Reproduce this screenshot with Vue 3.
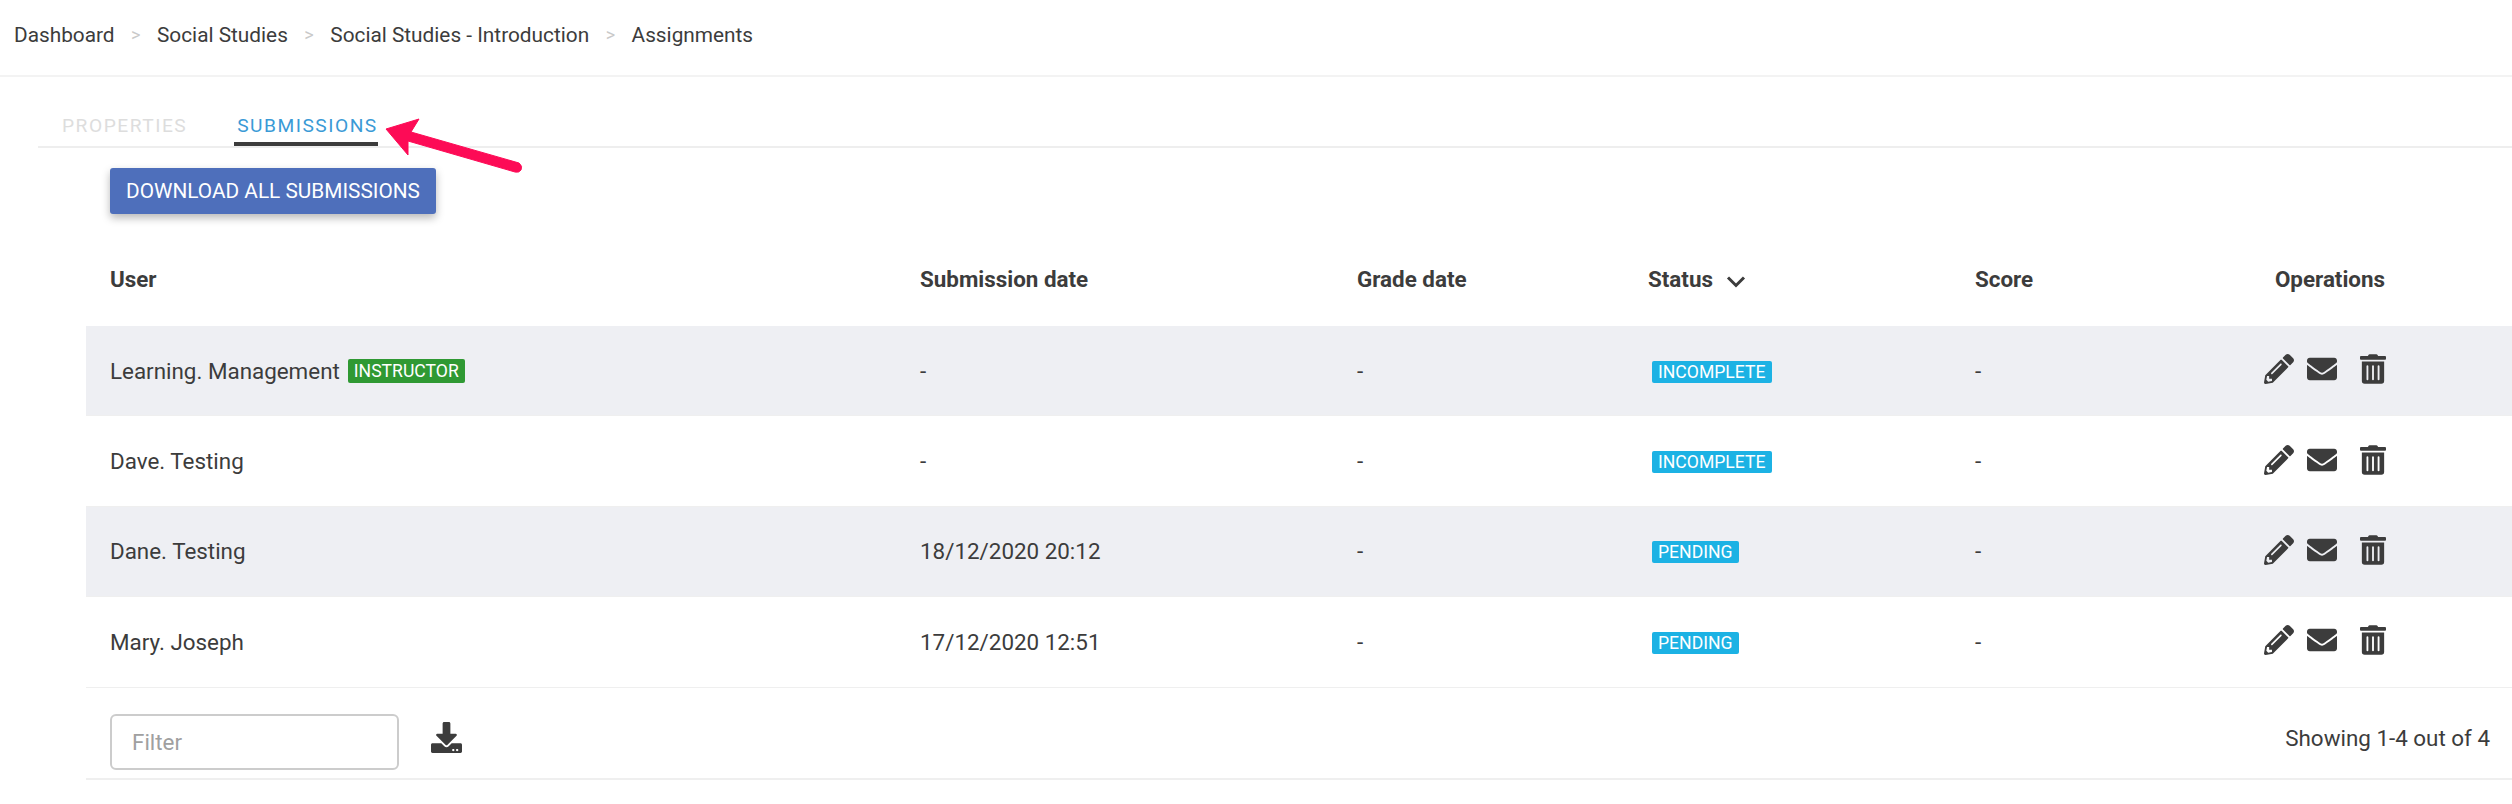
<script setup>
const rows = [
  { user: 'Learning. Management', instructor: true, submitted: '-', status: 'INCOMPLETE' },
  { user: 'Dave. Testing', submitted: '-', status: 'INCOMPLETE' },
  { user: 'Dane. Testing', submitted: '18/12/2020 20:12', status: 'PENDING' },
  { user: 'Mary. Joseph', submitted: '17/12/2020 12:51', status: 'PENDING' },
]
const crumbs = ['Dashboard', 'Social Studies', 'Social Studies - Introduction', 'Assignments']
</script>

<template>
  <div class="page">
    <nav class="crumbs">
      <template v-for="(c, i) in crumbs" :key="c">
        <span class="crumb">{{ c }}</span>
        <span v-if="i < crumbs.length - 1" class="sep">&gt;</span>
      </template>
    </nav>

    <div class="tabs">
      <span class="tab">PROPERTIES</span>
      <span class="tab active">SUBMISSIONS</span>
      <svg class="arrow" width="150" height="80" viewBox="0 0 150 80">
        <path d="M6 29 L39 19 L31 32 L139 63 Q143 66 141 70 Q139 73 135 72 L28 41 L28 55 Z" fill="#fd0b56" stroke="#fd0b56" stroke-width="1" stroke-linejoin="round"/>
      </svg>
    </div>

    <div class="toolbar">
      <button class="btn">DOWNLOAD ALL SUBMISSIONS</button>
    </div>

    <div class="table">
      <div class="row head">
        <div class="cell">User</div>
        <div class="cell">Submission date</div>
        <div class="cell">Grade date</div>
        <div class="cell status-head">
          <span>Status</span>
          <svg class="chev" width="20" height="13" viewBox="0 0 20 13"><path d="M2 2.5 L10 10.5 L18 2.5" fill="none" stroke="#3c3c3c" stroke-width="3"/></svg>
        </div>
        <div class="cell">Score</div>
        <div class="cell ops">Operations</div>
      </div>

      <div v-for="(r, i) in rows" :key="r.user" class="row body" :class="{ odd: i % 2 === 0 }">
        <div class="cell">
          <span>{{ r.user }}</span>
          <span v-if="r.instructor" class="badge green">INSTRUCTOR</span>
        </div>
        <div class="cell">{{ r.submitted }}</div>
        <div class="cell">-</div>
        <div class="cell"><span class="badge blue">{{ r.status }}</span></div>
        <div class="cell">-</div>
        <div class="cell ops icons">
          <svg width="30" height="30" viewBox="0 0 512 512"><path fill="#3c3c3c" d="M497.9 142.1l-46.1 46.1c-4.7 4.7-12.3 4.7-17 0l-111-111c-4.7-4.7-4.7-12.3 0-17l46.1-46.1c18.7-18.7 49.1-18.7 67.9 0l60.1 60.1c18.8 18.7 18.8 49.1 0 67.9zM284.2 99.8L21.6 362.4.4 483.9c-2.9 16.4 11.4 30.6 27.8 27.8l121.5-21.3 262.6-262.6c4.7-4.7 4.7-12.3 0-17l-111-111c-4.8-4.7-12.4-4.7-17.1 0zM124.1 339.9c-5.5-5.5-5.5-14.3 0-19.8l154-154c5.5-5.5 14.3-5.5 19.8 0s5.5 14.3 0 19.8l-154 154c-5.5 5.5-14.3 5.5-19.8 0zM88 424h48v36.3l-64.5 11.3-31.1-31.1L51.7 376H88v48z"/></svg>
          <svg class="mail" width="30" height="30" viewBox="0 0 512 512"><path fill="#3c3c3c" d="M502.3 190.8c3.9-3.1 9.7-.2 9.7 4.7V400c0 26.5-21.5 48-48 48H48c-26.5 0-48-21.5-48-48V195.6c0-5 5.7-7.8 9.7-4.7 22.4 17.4 52.1 39.5 154.1 113.6 21.1 15.4 56.7 47.8 92.2 47.6 35.7.3 72-32.8 92.3-47.6 102-74.1 131.6-96.3 154-113.7zM256 320c23.2.4 56.6-29.2 73.4-41.4 132.7-96.3 142.8-104.7 173.4-128.7 5.8-4.5 9.2-11.5 9.2-18.9v-19c0-26.5-21.5-48-48-48H48C21.5 64 0 85.5 0 112v19c0 7.4 3.4 14.3 9.2 18.9 30.6 23.9 40.7 32.4 173.4 128.7 16.8 12.2 50.2 41.8 73.4 41.4z"/></svg>
          <svg class="trash" width="26" height="30" viewBox="0 0 448 512"><path fill="#3c3c3c" d="M32 464a48 48 0 0 0 48 48h288a48 48 0 0 0 48-48V128H32zm272-256a16 16 0 0 1 32 0v224a16 16 0 0 1-32 0zm-96 0a16 16 0 0 1 32 0v224a16 16 0 0 1-32 0zm-96 0a16 16 0 0 1 32 0v224a16 16 0 0 1-32 0zM432 32H312l-9.4-18.7A24 24 0 0 0 281.1 0H166.8a23.72 23.72 0 0 0-21.4 13.3L136 32H16A16 16 0 0 0 0 48v32a16 16 0 0 0 16 16h416a16 16 0 0 0 16-16V48a16 16 0 0 0-16-16z"/></svg>
        </div>
      </div>

      <div class="foot">
        <input class="filter" placeholder="Filter" />
        <svg class="dl" width="31" height="31" viewBox="0 0 512 512"><path fill="#3c3c3c" d="M216 0h80c13.3 0 24 10.7 24 24v168h87.7c17.8 0 26.7 21.5 14.1 34.1L269.7 378.3c-7.5 7.5-19.8 7.5-27.3 0L90.1 226.1c-12.6-12.6-3.7-34.1 14.1-34.1H192V24c0-13.3 10.7-24 24-24zm296 376v112c0 13.3-10.7 24-24 24H24c-13.3 0-24-10.7-24-24V376c0-13.3 10.7-24 24-24h146.7l49 49c20.1 20.1 52.5 20.1 72.6 0l49-49H488c13.3 0 24 10.7 24 24zm-124 88c0-11-9-20-20-20s-20 9-20 20 9 20 20 20 20-9 20-20zm64 0c0-11-9-20-20-20s-20 9-20 20 9 20 20 20 20-9 20-20z"/></svg>
        <span class="count">Showing 1-4 out of 4</span>
      </div>
    </div>
  </div>
</template>

<style>
html, body { background: #fff; overflow: hidden; }
</style>

<style scoped>
.page { width: 2512px; height: 804px; font-family: Roboto, sans-serif; font-size: 22.4px; color: #3c3c3c; background: #fff; overflow: hidden; }
.crumbs { border-bottom: 2px solid #f3f3f3; display: flex; align-items: center; padding-left: 14px; padding-bottom: 6px; height: 69px; font-size: 20.8px; }
.sep { color: #c9c9c9; margin: 0 16.5px; font-size: 18px; }
.tabs { position: relative; margin-left: 38px; height: 71px; border-bottom: 2px solid #eeeeee; display: flex; align-items: flex-end; box-sizing: border-box; }
.tab { font-size: 19.2px; letter-spacing: 1.5px; color: #dddddd; margin-left: 24px; padding: 0 0 6px 0; height: 34px; box-sizing: border-box; line-height: 28px; }
.tab.active { color: #3a9ad6; border-bottom: 4px solid #3c3c3c; margin-left: 47px; padding-left: 3px; }
.arrow { position: absolute; left: 342px; top: 23px; }
.toolbar { padding: 20px 0 0 110px; height: 46px; }
.btn { display: block; width: 326px; height: 46px; background: #4e6fbb; color: #fff; border: 0; border-radius: 3px; font-family: Roboto, sans-serif; font-size: 20.8px; padding: 0; box-shadow: 0 4px 8px rgba(0,0,0,.28); }
.table { margin-left: 86px; }
.row { display: grid; grid-template-columns: 810px 437px 291px 327px 197px 364px; align-items: center; }
.head { height: 112px; font-weight: 700; padding-top: 18px; box-sizing: border-box; }
.body { height: 90.4px; border-bottom: 1px solid #efefef; box-sizing: border-box; }
.body.odd { background: #eeeff3; }
.cell { padding-left: 24px; display: flex; align-items: center; white-space: nowrap; }
.status-head { gap: 13px; }
.chev { margin-top: 4px; }
.ops { justify-content: center; padding: 0; }
.icons { gap: 13px; padding-right: 10px; box-sizing: border-box; }
.icons svg { margin-top: -3px; }
.icons .trash { margin-left: 10px; }
.badge { display: inline-block; color: #fff; font-size: 17.6px; border-radius: 2px; line-height: 22px; }
.badge.green { background: #2f9933; padding: 1px 6px; margin-left: 8px; }
.badge.blue { background: #1cb2e4; padding: 0 6px; margin-left: 4px; margin-top: 2px; }
.foot { height: 92.4px; border-bottom: 2px solid #efefef; box-sizing: border-box; display: flex; align-items: center; padding: 18px 0 0 24px; position: relative; }
.filter { width: 289px; height: 56px; box-sizing: border-box; border: 2px solid #cccccc; border-radius: 6px; font-family: Roboto, sans-serif; font-size: 22.4px; padding: 0 20px; outline: none; }
.filter::placeholder { color: #a0a0a0; }
.dl { margin-left: 32px; margin-top: -8px; }
.count { margin-left: auto; margin-right: 22px; margin-top: -8px; }
</style>
